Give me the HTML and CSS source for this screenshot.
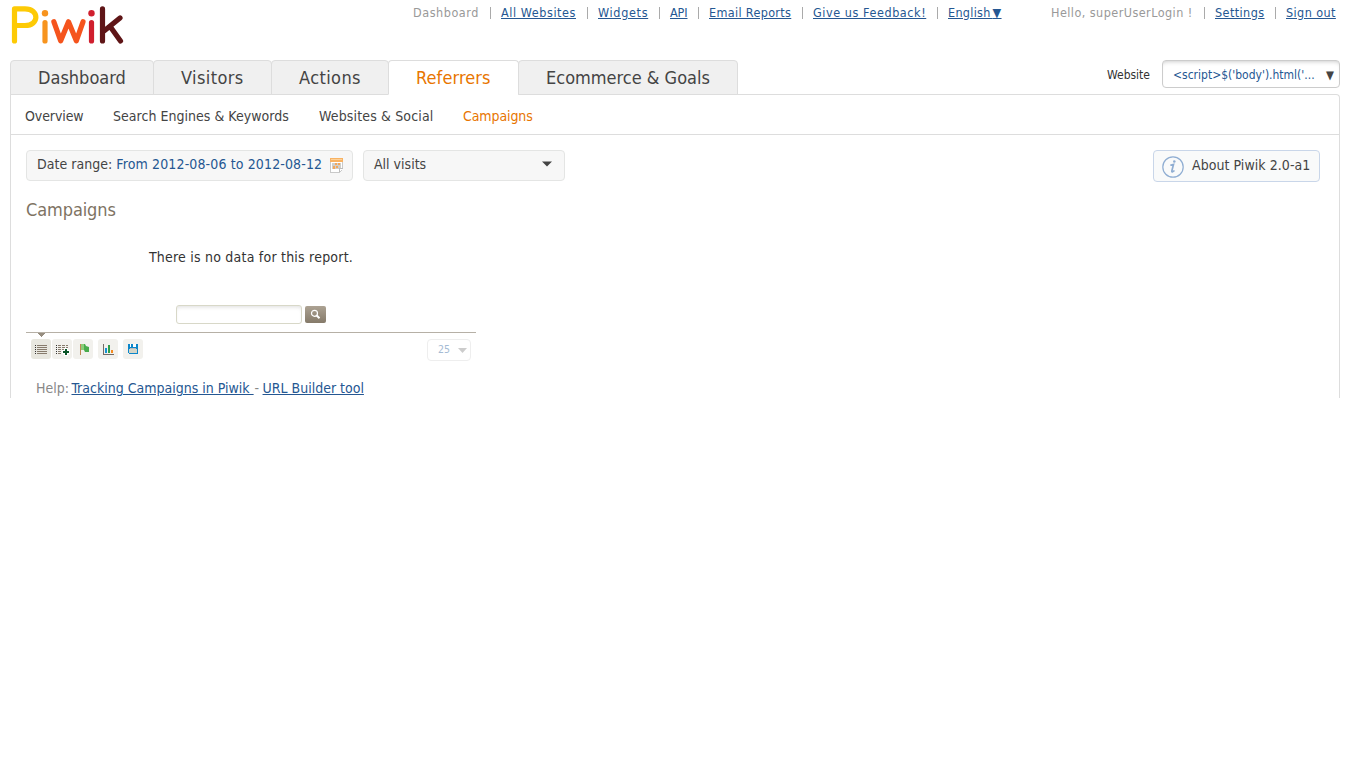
FILE: index.html
```html
<!DOCTYPE html>
<html lang="en">
<head>
<meta charset="utf-8">
<title>Piwik - Campaigns</title>
<link rel="stylesheet" href="styles.css">
</head>
<body>
<header class="header">
  <svg class="logo" width="130" height="52" viewBox="0 0 130 52" role="img" aria-label="Piwik">
    <g fill="none" stroke-width="5.2" stroke-linecap="round" stroke-linejoin="round">
      <path stroke="#fdca05" d="M14.500 41V8.900H25C39.500 8.900 39.500 25.500 25 25.500H15"/>
      <path stroke="#f7941e" d="M45 22.500V41"/>
      <path stroke="#f5541d" d="M53.900 21.800L60.700 40.800L68.500 21.800L76.300 40.800L83 21.800"/>
      <path stroke="#d01f2e" d="M91.500 22.500V41"/>
      <path stroke="#5f1517" d="M102.500 8.900V41M120 18L104 31M110.500 27L120.500 41"/>
    </g>
    <circle cx="45" cy="13.300" r="3.200" fill="#f7941e"/>
    <circle cx="91.500" cy="13.300" r="3.200" fill="#d01f2e"/>
  </svg>
  <nav class="topnav">
    <span class="top w66">Dashboard</span><i></i>
    <a class="top w75">All Websites</a><i></i>
    <a class="top w50">Widgets</a><i></i>
    <a class="top w17">API</a><i></i>
    <a class="top w82">Email Reports</a><i></i>
    <a class="top w113">Give us Feedback!</a><i></i>
    <a class="top w53 lang">English <b>▼</b></a>
  </nav>
  <div class="topnav user">
    <span class="top w142">Hello, superUserLogin !</span><i></i>
    <a class="top w49">Settings</a><i></i>
    <a class="top w49">Sign out</a>
  </div>
</header>
<div class="tabrow">
  <nav class="tabs">
    <a class="tab t1">Dashboard</a><a class="tab t2">Visitors</a><a class="tab t3">Actions</a><a class="tab t4 current">Referrers</a><a class="tab t5">Ecommerce &amp; Goals</a>
  </nav>
  <div class="site"><span>Website</span><div class="siteselect"><a>&lt;script&gt;$('body').html('...</a><b>▼</b></div></div>
</div>
<main class="panel">
  <nav class="subnav"><a class="s1">Overview</a><a class="s2">Search Engines &amp; Keywords</a><a class="s3">Websites &amp; Social</a><a class="s4 on">Campaigns</a></nav>
  <div class="controls">
    <div class="box date"><span>Date range: <a>From 2012-08-06 to 2012-08-12</a></span>
      <svg width="14" height="16" viewBox="0 0 14 16" shape-rendering="crispEdges"><path d="M.5 1.500H12.500V11.500L9.500 15.500H.5Z" fill="#fff" stroke="#c9c9c9"/><path d="M0 1H13V5H0Z" fill="#f8b262"/><path d="M1 2H12V3H1Z" fill="#fdd199"/><path d="M2 6H11V12H2Z" fill="#d0cec9"/><path d="M5 6H7V8H5ZM8 6H10V8H8ZM3 9H5V12H3ZM6 9H8V11H6Z" fill="#f2a65a"/><path d="M9.500 15V11.500H13" fill="#fff" stroke="#bbb"/></svg>
    </div>
    <div class="box segment"><span>All visits</span><svg width="10" height="6" viewBox="0 0 10 6"><path d="M0 .5H10L5 5.500Z" fill="#444"/></svg></div>
    <div class="about"><svg width="22" height="22" viewBox="0 0 22 22" fill="none" stroke="#8fadd2"><circle cx="11" cy="11" r="10.200" stroke-width="1.200"/><path d="M8.300 9.300L11.500 8.500L9.800 15Q9.800 17 12.500 14.500" stroke-width="1.700"/><circle cx="12.300" cy="5.500" r="1.300" fill="#8fadd2" stroke="none"/></svg><span>About Piwik 2.0-a1</span></div>
  </div>
  <section class="report">
    <h2>Campaigns</h2>
    <p class="empty">There is no data for this report.</p>
    <div class="search"><input type="text" aria-label="Search"><button aria-label="Search"><svg width="21" height="17" viewBox="0 0 21 17" fill="none" stroke="#fff"><circle cx="9.500" cy="7.300" r="3" stroke-width="1.200"/><path d="M11.700 9.500L14.500 12.300" stroke-width="2"/></svg></button></div>
    <div class="footer">
      <svg class="pointer" width="7" height="4" viewBox="0 0 7 4" shape-rendering="crispEdges"><path d="M0 0H7V1H6V2H5V3H4V4H3V3H2V2H1V1H0Z" fill="#968d7f"/></svg>
      <div class="icons">
        <a class="ico active"><svg viewBox="0 0 20 20" shape-rendering="crispEdges"><path d="M6 6.500H16M6 8.500H16M6 10.500H16M6 12.500H16M6 14.500H16" stroke="#877b6c"/><path d="M4.500 6V15" stroke="#333" stroke-dasharray="1"/></svg></a>
        <a class="ico"><svg viewBox="0 0 20 20" shape-rendering="crispEdges"><path d="M6 6.500H16M6 8.500H16M6 10.500H13M6 12.500H11M6 14.500H11" stroke="#877b6c" stroke-dasharray="3 1"/><path d="M4.500 6V15" stroke="#333" stroke-dasharray="1"/><path d="M10 13H18M14 9V17" stroke="#fff" stroke-width="4"/><path d="M11 13H17M14 10V16" stroke="#0a5528" stroke-width="2"/></svg></a>
        <a class="ico"><svg viewBox="0 0 20 20"><path d="M7.500 5V16" stroke="#bd8653"/><path d="M8 5H12L13 7L16 8V13L12 13L11 11H8Z" fill="#48ac4c"/><path d="M8 5H11V11H8Z" fill="#8bcc78"/></svg></a>
        <a class="ico gap"><svg viewBox="0 0 20 20" shape-rendering="crispEdges"><path d="M5.500 5V15.500H16" fill="none" stroke="#736b65"/><path d="M7 9H9V14H7Z" fill="#1593d2"/><path d="M10 6H12V14H10Z" fill="#2f9f48"/><path d="M13 11H15V14H13Z" fill="#f68b1f"/></svg></a>
        <a class="ico gap"><svg viewBox="0 0 20 20" shape-rendering="crispEdges"><path d="M5 5H14L15 6V14L14 15H6L5 14Z" fill="#0c86ca"/><path d="M7 5H13V8H7Z" fill="#fff"/><path d="M8 5H10V8H8Z" fill="#0c86ca"/><path d="M6 10H14V14H6Z" fill="#d5d5c7"/><path d="M7 9H13V10H7Z" fill="#bbb"/></svg></a>
      </div>
      <div class="limit"><span>25</span><svg width="9" height="5" viewBox="0 0 9 5"><path d="M0 0H9L4.500 5Z" fill="#ccc"/></svg></div>
    </div>
    <p class="help"><span>Help:</span> <a class="h1">Tracking Campaigns in Piwik&nbsp;</a><span>-</span> <a class="h2">URL Builder tool</a></p>
  </section>
</main>
</body>
</html>
```
FILE: styles.css
```css
* { box-sizing: border-box; }
body { margin: 0; background: #fff; color: #444; font-family: "DejaVu Sans Condensed", "DejaVu Sans", sans-serif; font-stretch: condensed; font-size: 14px; line-height: 20px; white-space: nowrap; }
a { color: #255792; }
svg { display: block; flex: none; }
.header { height: 60px; display: flex; align-items: flex-start; }
.logo { margin-right: 283px; }
.topnav { display: flex; align-items: center; height: 16px; margin-top: 5px; font-size: 12.5px; line-height: 16px; }
.topnav i { width: 1px; height: 12px; margin: 0 10px 0 11px; background: #aaa; }
.top { color: #999; }
a.top { color: #255792; text-decoration: underline; }
.w66 { width: 66px; letter-spacing: .55px; }
.w75 { width: 75px; letter-spacing: .57px; }
.w50 { width: 50px; letter-spacing: .68px; }
.w17 { width: 17px; letter-spacing: -.1px; }
.w82 { width: 82px; letter-spacing: .34px; }
.w113 { width: 113px; letter-spacing: .57px; }
.w53 { width: 53px; letter-spacing: .3px; }
.w142 { width: 142px; letter-spacing: .45px; }
.w49 { width: 49px; letter-spacing: .42px; }
.user { margin-left: 50px; }
.lang { word-spacing: -2px; }
.top b { font-weight: normal; }
.tabrow { display: flex; justify-content: space-between; padding: 0 10px; height: 34px; }
.tabs { display: flex; height: 35px; position: relative; z-index: 1; }
.tab { height: 35px; border: 1px solid #ddd; border-radius: 4px 4px 0 0; background: #f0f0f0; color: #444; font-size: 18px; line-height: 34px; margin-left: -1px; padding-left: 27px; }
.t1 { width: 144px; margin-left: 0; }
.t2 { width: 119px; letter-spacing: .4px; }
.t3 { width: 118px; letter-spacing: .4px; }
.t4 { width: 131px; letter-spacing: .1px; }
.t5 { width: 220px; }
.current { background: #fff; color: #e87500; border-bottom-color: #fff; }
.site { display: flex; font-size: 12px; line-height: 28px; color: #333; }
.site > span { position: relative; top: 1px; }
.siteselect { width: 178px; height: 28px; margin-left: 12px; border: 1px solid #ccc; border-radius: 4px; box-shadow: inset 0 4px 5px -4px #bbb; display: flex; justify-content: space-between; padding: 0 5px 0 10px; }
.siteselect b { font-weight: normal; font-size: 11.5px; color: #444; }
.panel { margin: 0 10px; height: 304px; border: 1px solid #ddd; border-bottom: 0; border-radius: 0 4px 0 0; }
.subnav { display: flex; height: 40px; padding-left: 14px; border-bottom: 1px solid #ddd; line-height: 42px; }
.subnav a { color: #444; }
.subnav .on { color: #e87500; }
.s1 { width: 88px; letter-spacing: -.1px; }
.s2 { width: 206px; letter-spacing: .03px; }
.s3 { width: 144px; letter-spacing: .15px; }
.s4 { letter-spacing: -.1px; }
.controls { display: flex; padding: 15px 19px 0 15px; }
.box { height: 31px; border: 1px solid #e4e5e4; border-radius: 4px; background: #f7f7f7; display: flex; justify-content: space-between; padding: 0 9px 0 10px; line-height: 27px; }
.date { width: 327px; margin-right: 10px; padding-right: 8px; letter-spacing: .03px; }
.date a { letter-spacing: .13px; }
.date svg { margin-top: 6px; }
.segment { width: 202px; padding-right: 12px; }
.segment svg { margin-top: 10px; }
.about { margin-left: auto; width: 167px; height: 32px; border: 1px solid #c9d6e9; border-radius: 4px; background: #f9fafa; display: flex; padding-left: 8px; line-height: 29px; letter-spacing: .05px; }
.about svg { margin: 5px 8px 0 0; }
.report { width: 450px; margin: 16px 0 0 15px; }
.report h2 { margin: 0; font-size: 18px; font-weight: normal; line-height: 24px; color: #7e7363; letter-spacing: -.1px; }
.empty { margin: 25px 0 0; text-align: center; color: #333; line-height: 20px; letter-spacing: .22px; }
.search { display: flex; margin: 38px 0 0 150px; }
.search input { width: 126px; height: 19px; margin: 0 3px 0 0; padding: 0; border: 1px solid #d8d8c8; border-radius: 3px; box-shadow: inset 0 3px 4px -2px #ddd; }
.search button { width: 21px; height: 17px; margin-top: 1px; padding: 0; border: 0; border-radius: 2px; background: linear-gradient(#aca293, #857a69); }
.footer { position: relative; display: flex; justify-content: space-between; margin-top: 8px; border-top: 1px solid #b6b0a6; height: 31px; padding: 6px 5px 0; }
.pointer { position: absolute; left: 12px; top: 0; }
.icons { display: flex; gap: 1px; }
.ico { width: 20px; height: 20px; border-radius: 3px; background: #f2f1ed; }
.ico.active { background: #e8e7df; }
.ico.gap { margin-left: 4px; }
.limit { width: 44px; height: 22px; border: 1px solid #eee; border-radius: 4px; display: flex; justify-content: space-between; padding: 0 3px 0 10px; font-size: 10.5px; line-height: 19px; color: #a5bbd4; }
.limit svg { margin-top: 8px; }
.help { display: flex; margin: 15px 0 0 10px; line-height: 20px; color: #888; }
.help a { text-decoration: underline; }
.h1 { width: 183px; margin-left: 2.5px; }
.h2 { margin-left: 3.5px; }
```
